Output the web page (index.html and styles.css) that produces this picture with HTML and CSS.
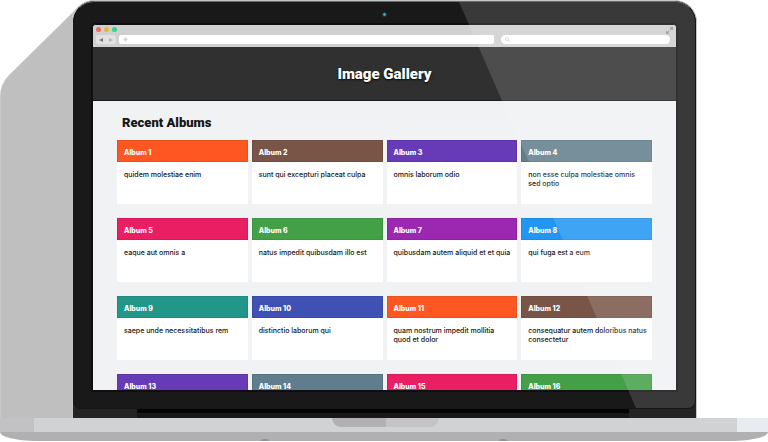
FILE: index.html
```html
<!DOCTYPE html>
<html lang="en">
<head>
<meta charset="utf-8">
<meta name="viewport" content="width=device-width, initial-scale=1">
<title>Image Gallery</title>
<link rel="stylesheet" href="styles.css">
</head>
<body>
<div class="laptop">
  <div class="upper">
    <svg class="cast-shadow" aria-hidden="true">
      <path fill="#c9c9c9" d="M0 2000V96Q0 84 9 75L73 12Q82 0 96 0V2000Z"/>
      <path fill="#bfbfbf" d="M1 2000V96Q1 85 9 76L72 14V2000Z"/>
    </svg>
    <div class="lid">
      <div class="bezel">
        <span class="camera"></span>
        <div class="screen">
          <div class="browser">
            <div class="lights"><i class="red"></i><i class="yellow"></i><i class="green"></i>
              <svg class="expand" viewBox="0 0 7 7" aria-hidden="true"><path fill="#999" d="M3.5 0H7V3.5L5.8 2.3L4.5 3.5L3.5 2.5L4.7 1.2ZM0 3.5L1.2 4.7L2.5 3.5L3.5 4.5L2.3 5.8L3.5 7H0Z"/></svg>
            </div>
            <div class="toolbar">
              <div class="nav">
                <button type="button" aria-label="Back"><svg viewBox="0 0 4 4"><path fill="#777" d="M4 0V4L0 2Z"/></svg></button>
                <button type="button" aria-label="Forward"><svg viewBox="0 0 4 4"><path fill="#b5b5b5" d="M0 0V4L4 2Z"/></svg></button>
              </div>
              <div class="field address">
                <svg viewBox="0 0 5 5" aria-hidden="true"><path fill="#d2d2d2" d="M1.8 .5h1.4v1.3H4.5v1.4H3.2v1.3H1.8V3.2H.5V1.8h1.3z"/></svg>
                <input type="text" aria-label="Address">
              </div>
              <div class="field search">
                <svg viewBox="0 0 5 5" aria-hidden="true"><circle cx="2" cy="2" r="1.5" fill="none" stroke="#c6c6c6" stroke-width=".7"/><path stroke="#c6c6c6" stroke-width=".8" d="M3.1 3.1L4.8 4.8"/></svg>
                <input type="search" aria-label="Search">
              </div>
            </div>
          </div>
          <header class="banner"><h1>Image Gallery</h1></header>
          <main>
            <h2>Recent Albums</h2>
            <div class="albums">
              <article class="album orange"><h3>Album 1</h3><p>quidem molestiae enim</p></article>
              <article class="album brown"><h3>Album 2</h3><p>sunt qui excepturi placeat culpa</p></article>
              <article class="album violet"><h3>Album 3</h3><p>omnis laborum odio</p></article>
              <article class="album slate"><h3>Album 4</h3><p>non esse culpa molestiae omnis sed optio</p></article>
              <article class="album pink"><h3>Album 5</h3><p>eaque aut omnis a</p></article>
              <article class="album leaf"><h3>Album 6</h3><p>natus impedit quibusdam illo est</p></article>
              <article class="album purple"><h3>Album 7</h3><p>quibusdam autem aliquid et et quia</p></article>
              <article class="album blue"><h3>Album 8</h3><p>qui fuga est a eum</p></article>
              <article class="album teal"><h3>Album 9</h3><p>saepe unde necessitatibus rem</p></article>
              <article class="album indigo"><h3>Album 10</h3><p>distinctio laborum qui</p></article>
              <article class="album orange"><h3>Album 11</h3><p>quam nostrum impedit mollitia<br>quod et dolor</p></article>
              <article class="album brown"><h3>Album 12</h3><p>consequatur autem doloribus natus consectetur</p></article>
              <article class="album violet"><h3>Album 13</h3></article>
              <article class="album slate"><h3>Album 14</h3></article>
              <article class="album pink"><h3>Album 15</h3></article>
              <article class="album leaf"><h3>Album 16</h3></article>
            </div>
          </main>
        </div>
        <div class="glare"></div>
      </div>
      <div class="hinge"><span></span></div>
    </div>
  </div>
  <div class="deck"><span class="notch"></span></div>
  <div class="underside"><i></i><i></i></div>
</div>
</body>
</html>
```

FILE: styles.css
```css
* { box-sizing: border-box; }

body {
  margin: 0;
  background: #fff;
  font-family: Inter, "Open Sans", sans-serif;
}

h1, h2, h3, p { margin: 0; }

svg { display: block; }

.laptop {
  display: flex;
  flex-direction: column;
  height: 100vh;
  padding-bottom: 1px;
}

.upper {
  position: relative;
  flex: 1;
  min-height: 0;
  display: flex;
}

.cast-shadow {
  position: absolute;
  left: 0;
  top: 0;
  width: 96px;
  height: 100%;
}

.lid {
  position: relative;
  flex: 1;
  display: flex;
  flex-direction: column;
  margin: 0 71px 0 72px;
  border: 1px solid #c4c7c7;
  border-bottom: 0;
  border-radius: 22px 22px 0 0;
  background: #242424;
  overflow: hidden;
}

.bezel {
  position: relative;
  flex: 1;
  min-height: 0;
  display: flex;
  flex-direction: column;
  align-items: center;
  padding: 10px 18px 17px;
  border: 1px solid #151515;
  border-top-color: #6b6e6e;
  border-radius: 21px 21px 8px 8px;
  background: #191919;
  overflow: hidden;
}

.camera {
  flex: none;
  width: 5px;
  height: 5px;
  margin-bottom: 7px;
  border: 1px solid #16323c;
  border-radius: 50%;
  background: #35a5c4;
}

.screen {
  flex: 1;
  min-height: 0;
  align-self: stretch;
  border: 1px solid #101014;
  border-radius: 4px 4px 0 0;
  background: #f0f2f4;
  overflow: hidden;
  box-shadow: 0 0 0 1px #0e0d12;
}

.glare {
  position: absolute;
  inset: 0;
  background: rgba(255, 255, 255, 0.14);
  clip-path: polygon(62% 0, 100% 0, 100% 100%, 90.5% 100%);
  pointer-events: none;
}

.browser {
  height: 22px;
  padding: 2px 6px 3px 3px;
  background: #d0d0d0;
}

.lights {
  display: flex;
  align-items: center;
  gap: 3px;
  height: 8px;
  padding-bottom: 3px;
}

.lights i {
  width: 5px;
  height: 5px;
  border-radius: 50%;
}

.red { background: #ec6b65; }
.yellow { background: #e0ba3e; }
.green { background: #35d38b; }

.expand {
  width: 7px;
  height: 7px;
  margin: 2px -3px 0 auto;
}

.toolbar {
  display: flex;
  height: 9px;
}

.nav {
  display: flex;
  width: 20px;
  margin-right: 3px;
  border-radius: 2px;
  background: #e2e2e2;
}

.nav button {
  flex: 1;
  display: grid;
  place-items: center;
  padding: 0;
  border: 0;
  background: none;
}

.nav svg {
  width: 4px;
  height: 4px;
}

.field {
  display: flex;
  align-items: center;
  padding-left: 4px;
  background: #fff;
}

.field svg {
  flex: none;
  width: 5px;
  height: 5px;
}

.field input {
  flex: 1;
  min-width: 0;
  height: 9px;
  padding: 0 3px;
  border: 0;
  outline: 0;
  background: none;
  font: 7px Inter, sans-serif;
}

.address {
  flex: 9;
  margin-right: 7px;
  border-radius: 2px;
}

.search {
  flex: 4;
  border-radius: 5px;
}

.banner {
  display: grid;
  place-items: center;
  height: 54px;
  border-bottom: 1px solid #1b1b1b;
  background: #303030;
  color: #fff;
}

h1, h2 {
  font-family: Roboto, "Open Sans", sans-serif;
  font-weight: 900;
}

h1 {
  font-size: 15px;
  line-height: 20px;
  text-shadow: 0 1px 2px #000;
}

main { padding: 12px 24px 0; }

h2 {
  padding-left: 5px;
  margin-bottom: 7px;
  font-size: 13px;
  line-height: 20px;
  color: #161616;
}

.albums {
  display: grid;
  grid-template-columns: repeat(4, 1fr);
  grid-auto-rows: 64px;
  gap: 14px 4px;
}

.album {
  background: #fff;
  font-size: 7px;
  line-height: 9px;
}

.album h3 {
  height: 22px;
  padding: 7px 6px 4px;
  border: 1px solid rgba(0, 0, 0, 0.08);
  font-size: 7px;
  line-height: 9px;
  font-weight: 800;
  color: #fff;
}

.album p {
  padding: 8px 4px 0 7px;
  font-weight: 500;
  color: #161616;
}

.orange h3 { background: #ff5722; }
.brown h3 { background: #795548; }
.violet h3 { background: #673ab7; }
.slate h3 { background: #607d8b; }
.pink h3 { background: #e91e63; }
.leaf h3 { background: #43a047; }
.purple h3 { background: #9c27b0; }
.blue h3 { background: #2196f3; }
.teal h3 { background: #229688; }
.indigo h3 { background: #3f51b5; }

.hinge {
  display: flex;
  height: 9px;
  padding: 0 67px 0 64px;
}

.hinge span {
  flex: 1;
  border-top: 4px solid #050505;
  background: #1a1816;
}

.deck {
  display: flex;
  justify-content: center;
  height: 14px;
  background: #d0d2d3;
  border: solid;
  border-width: 0 31px 0 34px;
  border-color: #c2c2c4 #e8ebf0 #c2c2c4 #c2c2c4;
}

.notch {
  width: 107px;
  height: 9px;
  border-radius: 0 0 9px 9px;
  background: linear-gradient(90deg, #b1b1b3 50%, #c4c4c6 50%);
}

.underside {
  display: flex;
  justify-content: space-between;
  align-items: flex-end;
  height: 9px;
  padding: 0 34%;
  border-radius: 0 0 36px 36px / 0 0 9px 9px;
  background: #b0b0b2;
}

.underside i {
  width: 8px;
  height: 2px;
  border-radius: 4px 4px 0 0;
  background: #929298;
}
```
